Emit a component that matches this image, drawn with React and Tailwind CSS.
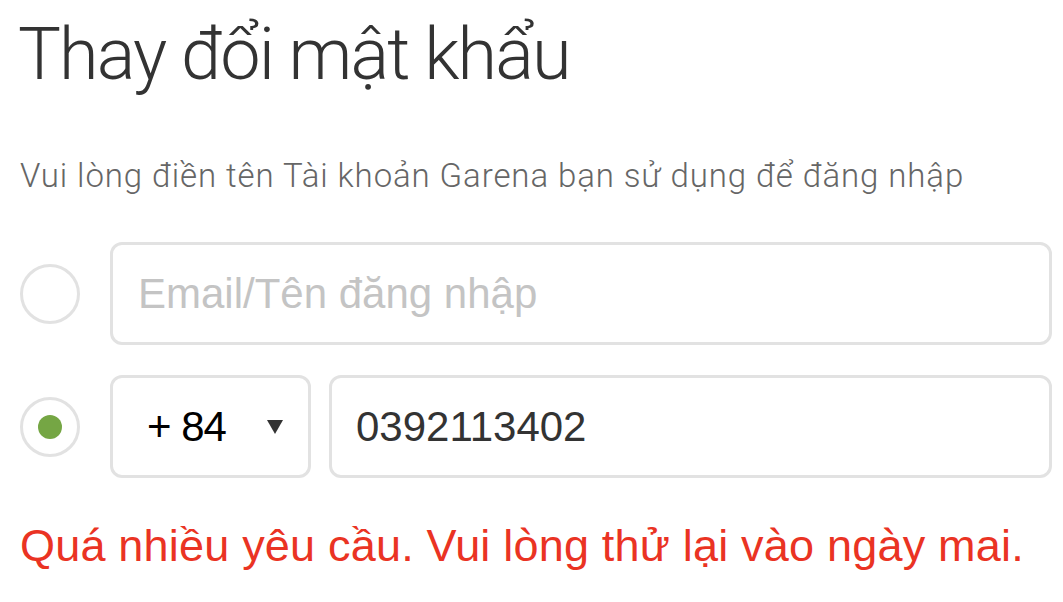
import React, { useState } from "react";

const Radio = ({ checked }) => (
  <div className="w-[60px] h-[60px] shrink-0 rounded-full border-[3px] border-[#e2e2e2] bg-white flex items-center justify-center">
    {checked && <div className="w-[24px] h-[24px] rounded-full bg-[#75a644]" />}
  </div>
);

const App = () => {
  const [mode, setMode] = useState("phone");
  const [phone, setPhone] = useState("0392113402");

  return (
    <div className="min-h-screen bg-white pl-[20px] pr-[11px] pt-[19px] font-['Liberation_Sans',Arial,sans-serif]">
      {/* Header */}
      <h1 className="font-['Roboto',sans-serif] font-light text-[72px] leading-[72px] tracking-[-1.9px] text-[#333] -ml-[2px]">
        Thay đổi mật khẩu
      </h1>
      <p className="mt-[68px] font-['Roboto',sans-serif] font-light text-[33px] leading-[33px] tracking-[0.9px] text-[#666]">
        Vui lòng điền tên Tài khoản Garena bạn sử dụng để đăng nhập
      </p>

      {/* Username row */}
      <div className="mt-[50px] flex items-center gap-[30px]" onClick={() => setMode("user")}>
        <Radio checked={mode === "user"} />
        <input
          type="text"
          placeholder="Email/Tên đăng nhập"
          className="flex-1 h-[103px] rounded-[12px] border-[3px] border-[#e2e2e2] px-[25px] text-[42px] text-[#333] placeholder:text-[#c4c4c4] outline-none"
        />
      </div>

      {/* Phone row */}
      <div className="mt-[30px] flex items-center gap-[30px]" onClick={() => setMode("phone")}>
        <Radio checked={mode === "phone"} />
        <div className="flex-1 flex gap-[18px]">
          <div className="w-[201px] h-[103px] rounded-[12px] border-[3px] border-[#e2e2e2] flex items-center justify-between pl-[34px] pr-[25px]">
            <span className="text-[42px] tracking-[-1px] text-black">+ 84</span>
            <span className="w-0 h-0 border-l-[8px] border-r-[8px] border-t-[14px] border-l-transparent border-r-transparent border-t-[#333]" />
          </div>
          <input
            type="text"
            value={phone}
            onChange={(e) => setPhone(e.target.value)}
            className="flex-1 h-[103px] rounded-[12px] border-[3px] border-[#e2e2e2] px-[24px] text-[42px] text-[#333] outline-none"
          />
        </div>
      </div>

      {/* Error */}
      <p className="mt-[45px] text-[45px] leading-[45px] tracking-[0.2px] text-[#ea3323]">
        Quá nhiều yêu cầu. Vui lòng thử lại vào ngày mai.
      </p>
    </div>
  );
};

export default App;
